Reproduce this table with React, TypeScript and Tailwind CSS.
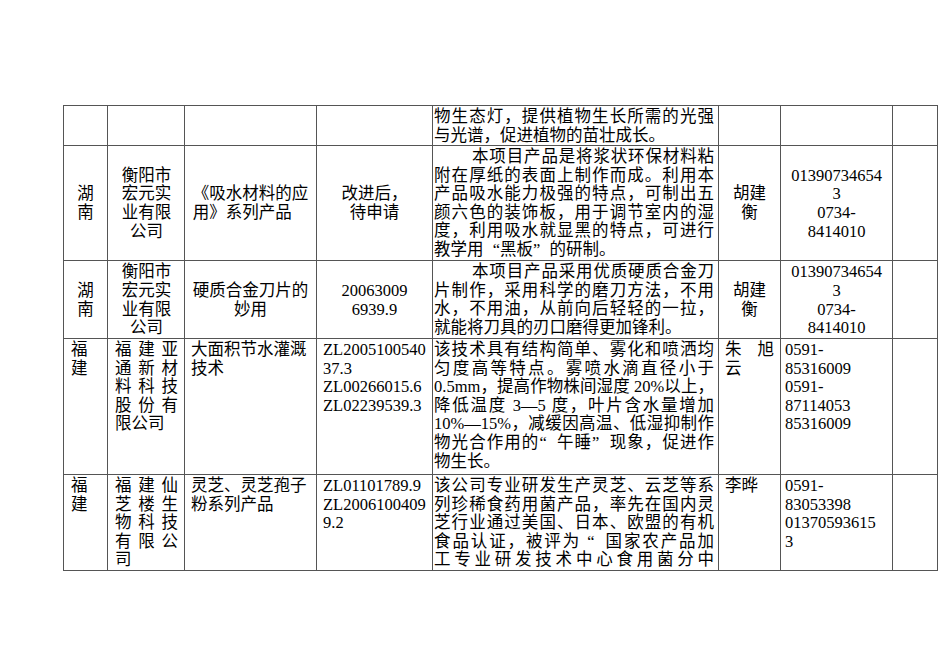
import React from "react";

type Align = "left" | "center" | "block" | "justify" | "spread";

interface Cell {
  lines?: string[];
  align?: Align;
  middle?: boolean;
  indent?: boolean;
  justifyLast?: boolean;
}

interface Row {
  h: number;
  cells: Cell[];
}

// horizontal padding of each column
const colPad = [
  "px-[7px]",
  "pl-[7px] pr-[6px]",
  "px-[6px]",
  "px-[6px]",
  "pl-[1px] pr-[4px]",
  "px-[6px]",
  "px-[4px]",
  "px-[4px]",
];

const rows: Row[] = [
  {
    h: 39,
    cells: [
      {},
      {},
      {},
      {},
      {
        lines: ["物生态灯，提供植物生长所需的光强", "与光谱，促进植物的苗壮成长。"],
        align: "justify",
      },
      {},
      {},
      {},
    ],
  },
  {
    h: 114,
    cells: [
      { lines: ["湖", "南"], align: "center", middle: true },
      { lines: ["衡阳市", "宏元实", "业有限", "公司"], align: "center", middle: true },
      { lines: ["《吸水材料的应", "用》系列产品"], align: "block", middle: true },
      { lines: ["改进后，", "待申请"], align: "center", middle: true },
      {
        lines: [
          "本项目产品是将浆状环保材料粘",
          "附在厚纸的表面上制作而成。利用本",
          "产品吸水能力极强的特点，可制出五",
          "颜六色的装饰板，用于调节室内的湿",
          "度，利用吸水就显黑的特点，可进行",
          "教学用“黑板”的研制。",
        ],
        align: "justify",
        indent: true,
      },
      { lines: ["胡建", "衡"], align: "center", middle: true },
      { lines: ["01390734654", "3", "0734-", "8414010"], align: "center", middle: true },
      {},
    ],
  },
  {
    h: 77,
    cells: [
      { lines: ["湖", "南"], align: "center", middle: true },
      { lines: ["衡阳市", "宏元实", "业有限", "公司"], align: "center", middle: true },
      { lines: ["硬质合金刀片的", "妙用"], align: "center", middle: true },
      { lines: ["20063009", "6939.9"], align: "center", middle: true },
      {
        lines: [
          "本项目产品采用优质硬质合金刀",
          "片制作，采用科学的磨刀方法，不用",
          "水，不用油，从前向后轻轻的一拉，",
          "就能将刀具的刃口磨得更加锋利。",
        ],
        align: "justify",
        indent: true,
      },
      { lines: ["胡建", "衡"], align: "center", middle: true },
      { lines: ["01390734654", "3", "0734-", "8414010"], align: "center", middle: true },
      {},
    ],
  },
  {
    h: 135,
    cells: [
      { lines: ["福", "建"] },
      { lines: ["福建亚", "通新材", "料科技", "股份有", "限公司"], align: "spread" },
      { lines: ["大面积节水灌溉", "技术"] },
      { lines: ["ZL2005100540", "37.3", "ZL00266015.6", "ZL02239539.3"] },
      {
        lines: [
          "该技术具有结构简单、雾化和喷洒均",
          "匀度高等特点。雾喷水滴直径小于",
          "0.5mm，提高作物株间湿度 20%以上，",
          "降低温度 3—5 度，叶片含水量增加",
          "10%—15%，减缓因高温、低湿抑制作",
          "物光合作用的“午睡”现象，促进作",
          "物生长。",
        ],
        align: "justify",
      },
      { lines: ["朱旭", "云"], align: "spread" },
      { lines: ["0591-", "85316009", "0591-", "87114053", "85316009"] },
      {},
    ],
  },
  {
    h: 95,
    cells: [
      { lines: ["福", "建"] },
      { lines: ["福建仙", "芝楼生", "物科技", "有限公", "司"], align: "spread" },
      { lines: ["灵芝、灵芝孢子", "粉系列产品"] },
      { lines: ["ZL01101789.9", "ZL2006100409", "9.2"] },
      {
        lines: [
          "该公司专业研发生产灵芝、云芝等系",
          "列珍稀食药用菌产品，率先在国内灵",
          "芝行业通过美国、日本、欧盟的有机",
          "食品认证，被评为 “国家农产品加",
          "工专业研发技术中心食用菌分中",
        ],
        align: "justify",
        justifyLast: true,
      },
      { lines: ["李晔"] },
      { lines: ["0591-", "83053398", "01370593615", "3"] },
      {},
    ],
  },
];

// curly quotes take a full-width cell, as in the source document
function Text({ s }: { s: string }) {
  const parts = s.split(/([“”])/);
  return (
    <>
      {parts.map((p, i) =>
        p === "“" ? (
          <span key={i} className="inline-block w-[1em] text-right indent-0">
            {p}
          </span>
        ) : p === "”" ? (
          <span key={i} className="inline-block w-[1em] text-left indent-0">
            {p}
          </span>
        ) : (
          <React.Fragment key={i}>{p}</React.Fragment>
        )
      )}
    </>
  );
}

function CellView({ cell, col }: { cell: Cell; col: number }) {
  const lines = cell.lines ?? [];
  const align = cell.align ?? "left";
  const n = lines.length;

  const lineClass = (i: number) => {
    const isLast = i === n - 1;
    if (align === "center") return "text-center";
    if (align === "justify" || align === "spread") {
      if (isLast && !cell.justifyLast) return "text-left";
      return "text-justify [text-align-last:justify]";
    }
    return "text-left";
  };

  const body = lines.map((l, i) => (
    <div
      key={i}
      className={`whitespace-nowrap ${lineClass(i)} ${cell.indent && i === 0 ? "indent-[38px]" : ""}`}
    >
      <Text s={l} />
    </div>
  ));

  return (
    <div
      className={`flex flex-col bg-white overflow-hidden ${colPad[col]} pt-[2px] ${
        cell.middle ? "justify-center" : "justify-start"
      }`}
    >
      {align === "block" ? (
        <div className="flex justify-center">
          <div className="text-left">{body}</div>
        </div>
      ) : (
        body
      )}
    </div>
  );
}

export default function App() {
  return (
    <div className="w-[950px] h-[672px] bg-white overflow-hidden pt-[105px] pl-[63px]">
      <div
        className="grid w-fit gap-px p-px bg-[#555555] text-black text-[16.5px] leading-[18.6px]"
        style={{ fontFamily: '"Liberation Serif", "Noto Sans CJK SC", serif' }}
      >
        {rows.map((row, r) => (
          <div
            key={r}
            className="grid gap-px grid-cols-[43px_76px_131px_115px_285px_61px_111px_44px]"
            style={{ height: row.h }}
          >
            {row.cells.map((c, ci) => (
              <CellView key={ci} cell={c} col={ci} />
            ))}
          </div>
        ))}
      </div>
    </div>
  );
}
